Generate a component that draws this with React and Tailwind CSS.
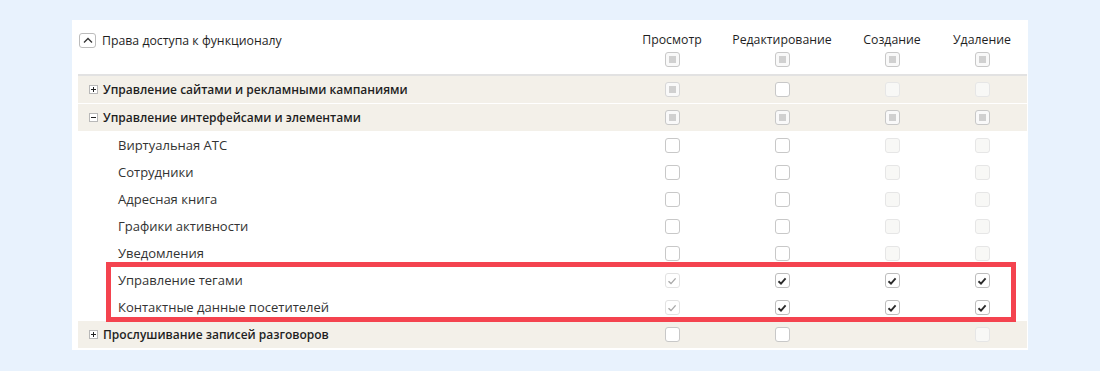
import React from "react";

const cols = ["w-[90px]", "w-[130px]", "w-[90px]", "w-[90px]"];
const heads = ["Просмотр", "Редактирование", "Создание", "Удаление"];

// e = enabled empty, d = disabled empty, i = indeterminate, id = indeterminate disabled,
// c = checked, cd = checked disabled, n = nothing
const Box = ({ s }) => {
  if (s === "n") return <span className="w-[15px] h-[15px]" />;
  const base = "w-[15px] h-[15px] rounded-[3px] border flex items-center justify-center";
  if (s === "e") return <span className={`${base} border-[#c8c8c8] bg-white`} />;
  if (s === "d") return <span className={`${base} border-[#e6e6e6] bg-[#f8f8f6]`} />;
  if (s === "i" || s === "id")
    return (
      <span className={`${base} ${s === "i" ? "border-[#c8c8c8]" : "border-[#d6d6d6]"} bg-[#f9f9f9]`}>
        <span className="w-[7px] h-[7px] bg-[#d0d0d0]" />
      </span>
    );
  const dark = s === "c";
  return (
    <span className={`${base} ${dark ? "border-[#bdbdbd]" : "border-[#e2e2e2]"} bg-white`}>
      <svg width="10" height="10" viewBox="0 0 10 10">
        <path
          d="M1.5 5.2 L4 7.6 L8.6 2.4"
          fill="none"
          stroke={dark ? "#2b2b2b" : "#a8a8a8"}
          strokeWidth={dark ? 1.9 : 1.4}
        />
      </svg>
    </span>
  );
};

const Cells = ({ states }) => (
  <div className="flex">
    {states.map((s, i) => (
      <div key={i} className={`${cols[i]} flex justify-center`}>
        <Box s={s} />
      </div>
    ))}
  </div>
);

const Expander = ({ open }) => (
  <span className="w-[9px] h-[9px] border border-[#b8b8b8] bg-white flex items-center justify-center mr-[5px] ml-[11px]">
    <span className="relative w-[5px] h-[1px] bg-[#222]">
      {!open && <span className="absolute left-[2px] top-[-2px] w-[1px] h-[5px] bg-[#222]" />}
    </span>
  </span>
);

const Section = ({ title, open, states }) => (
  <div className="h-[28px] flex items-center bg-[#f3f0e9] border-b border-white">
    <div className="flex-1 flex items-center text-[12px] font-semibold text-[#1f1f1f]">
      <Expander open={open} />
      {title}
    </div>
    <Cells states={states} />
  </div>
);

const Child = ({ title, states }) => (
  <div className="h-[27px] flex items-center">
    <div className="flex-1 pl-[40px] text-[#333]">{title}</div>
    <Cells states={states} />
  </div>
);

const plain = ["e", "e", "d", "d"];
const checked = ["cd", "c", "c", "c"];

export default function App() {
  return (
    <div
      className="w-[1100px] h-[371px] bg-[#e8f2fd] pt-[20px] pl-[72px] text-[13px]"
      style={{ fontFamily: '"Open Sans", "Liberation Sans", sans-serif' }}
    >
      <div className="relative w-[956px] h-[330px] bg-white pl-[6px] pr-[1px] pb-[3px]">
        <div className="h-[56px] flex border-b-2 border-[#e2e2e2] text-[12.3px]">
          <div className="flex-1 flex items-start pt-[12px] text-[#1f1f1f]">
            <span className="w-[17px] h-[15px] mt-[1px] border border-[#bcbcbc] rounded-[3px] flex items-center justify-center mr-[6px] ml-[1px]">
              <svg width="10" height="7" viewBox="0 0 10 7">
                <path d="M1 5.5 L5 1.5 L9 5.5" fill="none" stroke="#333" strokeWidth="1.3" />
              </svg>
            </span>
            Права доступа к функционалу
          </div>
          <div className="flex pt-[11px]">
            {heads.map((h, i) => (
              <div key={h} className={`${cols[i]} flex flex-col items-center gap-[3px] text-[#1f1f1f]`}>
                <span className="leading-[18px]">{h}</span>
                <Box s="i" />
              </div>
            ))}
          </div>
        </div>

        <Section title="Управление сайтами и рекламными кампаниями" states={["id", "e", "d", "d"]} />
        <Section title="Управление интерфейсами и элементами" open states={["i", "i", "i", "i"]} />
        <Child title="Виртуальная АТС" states={plain} />
        <Child title="Сотрудники" states={plain} />
        <Child title="Адресная книга" states={plain} />
        <Child title="Графики активности" states={plain} />
        <Child title="Уведомления" states={plain} />
        <Child title="Управление тегами" states={checked} />
        <Child title="Контактные данные посетителей" states={checked} />
        <Section title="Прослушивание записей разговоров" states={["e", "e", "n", "d"]} />

        <div className="absolute left-[34px] top-[242px] w-[910px] h-[60px] border-[5px] border-[#f4434f] pointer-events-none" />
      </div>
    </div>
  );
}
